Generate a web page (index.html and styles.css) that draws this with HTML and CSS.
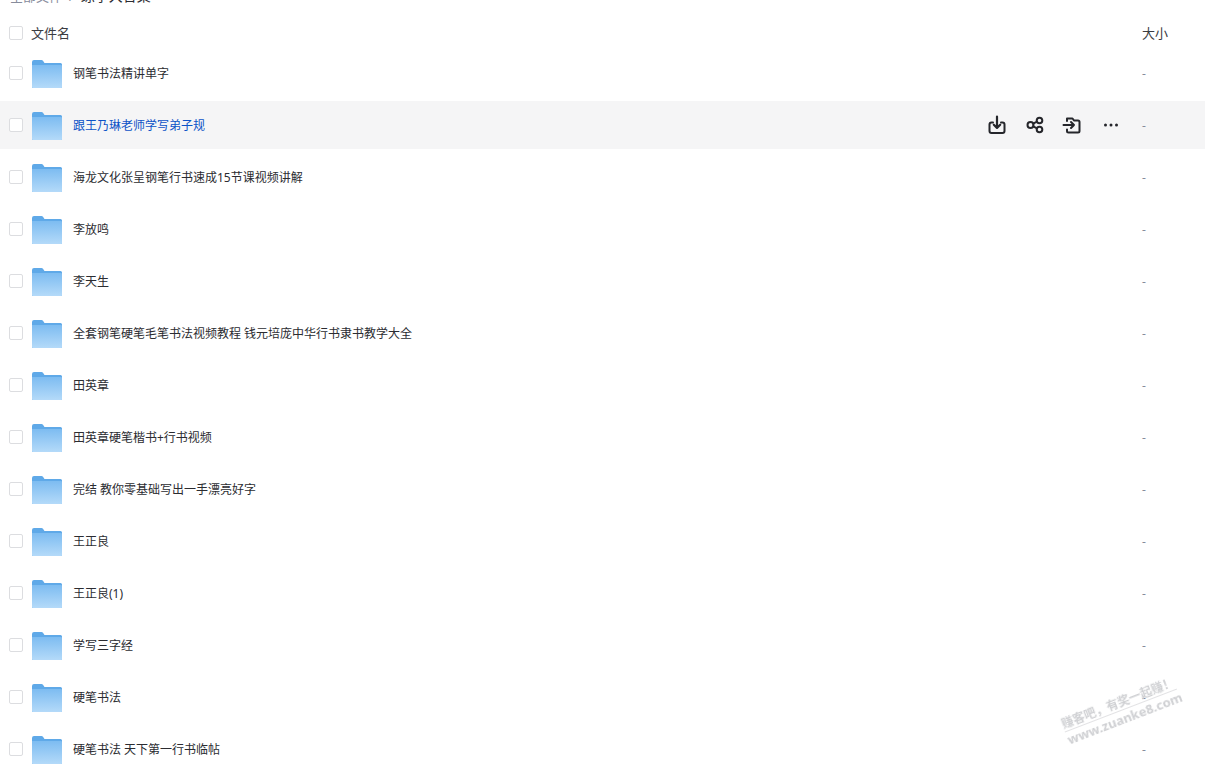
FILE: index.html
```html
<!DOCTYPE html>
<html lang="zh-CN">
<head>
<meta charset="utf-8">
<title>文件列表</title>
<link rel="stylesheet" href="styles.css">
</head>
<body>
<svg class="defs" width="0" height="0" aria-hidden="true">
  <defs>
    <linearGradient id="fg" x1="0" y1="0" x2="0" y2="1">
      <stop offset="0" stop-color="#7dbcf1"/>
      <stop offset="1" stop-color="#b4daf9"/>
    </linearGradient>
    <symbol id="folder" viewBox="0 0 30 28">
      <path d="M0 2a2 2 0 0 1 2-2h7.500a2 2 0 0 1 1.500.7L12.500 3H28.500a1.500 1.500 0 0 1 1.500 1.500V26.500a1.500 1.500 0 0 1-1.500 1.500H1a1 1 0 0 1-1-1z" fill="#5fa9e8"/>
      <path d="M0 5h29a1 1 0 0 1 1 1V27a1 1 0 0 1-1 1H1a1 1 0 0 1-1-1z" fill="url(#fg)"/>
    </symbol>
  </defs>
</svg>
<main class="page">
  <nav class="crumbs"><span class="crumb-root">全部文件</span><span class="crumb-sep">/</span><span class="crumb-current">练字大合集</span></nav>
  <header class="head">
    <span class="check"></span>
    <span class="head-name">文件名</span>
    <span class="head-size">大小</span>
  </header>
  <ul class="list">
    <li class="row"><span class="check"></span><svg class="folder"><use href="#folder"/></svg><span class="name">钢笔书法精讲单字</span><span class="size">-</span></li>
    <li class="row row-active"><span class="check"></span><svg class="folder"><use href="#folder"/></svg><span class="name">跟王乃琳老师学写弟子规</span>
      <span class="actions">
        <svg class="act" viewBox="0 0 20 20"><path d="M6 7.500H4.500A2 2 0 0 0 2.500 9.500v6.500a2 2 0 0 0 2 2h11a2 2 0 0 0 2-2V9.500a2 2 0 0 0-2-2H14"/><path d="M10 1.500v11M6.800 9.700l3.200 3.200 3.200-3.200" stroke-width="2.200"/></svg>
        <svg class="act" viewBox="0 0 20 20"><circle cx="5.500" cy="10" r="3"/><circle cx="14.500" cy="5.500" r="2.800"/><circle cx="14.500" cy="14.500" r="2.800"/><path d="M8.200 8.700l3.800-2M8.200 11.300l3.800 2"/></svg>
        <svg class="act act-move" viewBox="0 0 20 20"><path d="M5 6V3.500h5.500l1.500 2h4A1.500 1.500 0 0 1 17.500 7v9a1.500 1.500 0 0 1-1.500 1.500H6.500A1.500 1.500 0 0 1 5 16v-1.500"/><path d="M1.500 10H12M9 7l3 3-3 3"/></svg>
        <svg class="act act-more" viewBox="0 0 20 20"><circle cx="4.500" cy="10" r="1.500"/><circle cx="10" cy="10" r="1.500"/><circle cx="15.500" cy="10" r="1.500"/></svg>
      </span><span class="size">-</span></li>
    <li class="row"><span class="check"></span><svg class="folder"><use href="#folder"/></svg><span class="name">海龙文化张呈钢笔行书速成15节课视频讲解</span><span class="size">-</span></li>
    <li class="row"><span class="check"></span><svg class="folder"><use href="#folder"/></svg><span class="name">李放鸣</span><span class="size">-</span></li>
    <li class="row"><span class="check"></span><svg class="folder"><use href="#folder"/></svg><span class="name">李天生</span><span class="size">-</span></li>
    <li class="row"><span class="check"></span><svg class="folder"><use href="#folder"/></svg><span class="name">全套钢笔硬笔毛笔书法视频教程 钱元培庞中华行书隶书教学大全</span><span class="size">-</span></li>
    <li class="row"><span class="check"></span><svg class="folder"><use href="#folder"/></svg><span class="name">田英章</span><span class="size">-</span></li>
    <li class="row"><span class="check"></span><svg class="folder"><use href="#folder"/></svg><span class="name">田英章硬笔楷书+行书视频</span><span class="size">-</span></li>
    <li class="row"><span class="check"></span><svg class="folder"><use href="#folder"/></svg><span class="name">完结 教你零基础写出一手漂亮好字</span><span class="size">-</span></li>
    <li class="row"><span class="check"></span><svg class="folder"><use href="#folder"/></svg><span class="name">王正良</span><span class="size">-</span></li>
    <li class="row"><span class="check"></span><svg class="folder"><use href="#folder"/></svg><span class="name">王正良(1)</span><span class="size">-</span></li>
    <li class="row"><span class="check"></span><svg class="folder"><use href="#folder"/></svg><span class="name">学写三字经</span><span class="size">-</span></li>
    <li class="row"><span class="check"></span><svg class="folder"><use href="#folder"/></svg><span class="name">硬笔书法</span><span class="size">-</span></li>
    <li class="row"><span class="check"></span><svg class="folder"><use href="#folder"/></svg><span class="name">硬笔书法 天下第一行书临帖</span><span class="size">-</span></li>
  </ul>
  <div class="watermark">
    <div class="wm-cn">赚客吧，有奖一起赚！</div>
    <div class="wm-en">www.zuanke8.com</div>
  </div>
</main>
</body>
</html>
```
FILE: styles.css
```css
* { box-sizing: border-box; }
html, body { margin: 0; height: 100%; overflow: hidden; background: #fff; }
body { font-family: "Noto Sans", "Noto Sans CJK SC", sans-serif; font-size: 12px; color: #2b2c31; }
.defs { position: absolute; }
.page { position: relative; height: 767px; overflow: hidden; }
.crumbs { height: 16px; margin-top: -12px; padding-left: 10px; display: flex; align-items: center; gap: 7px; font-size: 13px; line-height: 16px; }
.crumb-root { color: #878c9c; }
.crumb-sep { color: #878c9c; }
.crumb-current { font-size: 14px; }
.head { height: 45px; padding-top: 12px; display: flex; align-items: center; padding-left: 9px; font-size: 13px; color: #3b3c42; }
.head-name { margin-left: 8px; flex: 1; margin-top: -1px; }
.head-size { width: 63px; margin-top: -1px; }
.check { flex: none; width: 14px; height: 14px; border: 1px solid #dcdde0; border-radius: 2px; background: #fff; }
.list { list-style: none; margin: 0; padding: 0; display: flex; flex-direction: column; gap: 4px; }
.row { flex: none; height: 48px; display: flex; align-items: center; padding-left: 9px; }
.row-active { background: #f5f5f6; }
.row-active .name { color: #0d53c7; }
.folder { flex: none; width: 30px; height: 28px; margin-left: 9px; margin-top: 1px; }
.name { flex: 1; margin-left: 11px; padding-top: 1px; white-space: pre; line-height: 16px; }
.size { flex: none; width: 63px; color: #878c9c; }
.actions { flex: none; display: flex; gap: 18px; margin-right: 21px; }
.act { width: 20px; height: 20px; fill: none; stroke: #25262b; stroke-width: 2; stroke-linecap: round; stroke-linejoin: round; }
.act-move { margin-left: -1px; margin-right: 1px; }
.act-more { fill: #25262b; stroke: none; }
.watermark { position: absolute; left: 1061px; top: 695px; width: 120px; transform: rotate(-21deg); transform-origin: 50% 50%; color: #cfd0d3; text-align: center; pointer-events: none; filter: blur(0.3px); }
.wm-cn { font-size: 12px; line-height: 15px; font-weight: 700; border-bottom: 1px solid #e2e2e4; white-space: nowrap; }
.wm-en { font-size: 13px; line-height: 16px; font-weight: 700; white-space: nowrap; }
```
